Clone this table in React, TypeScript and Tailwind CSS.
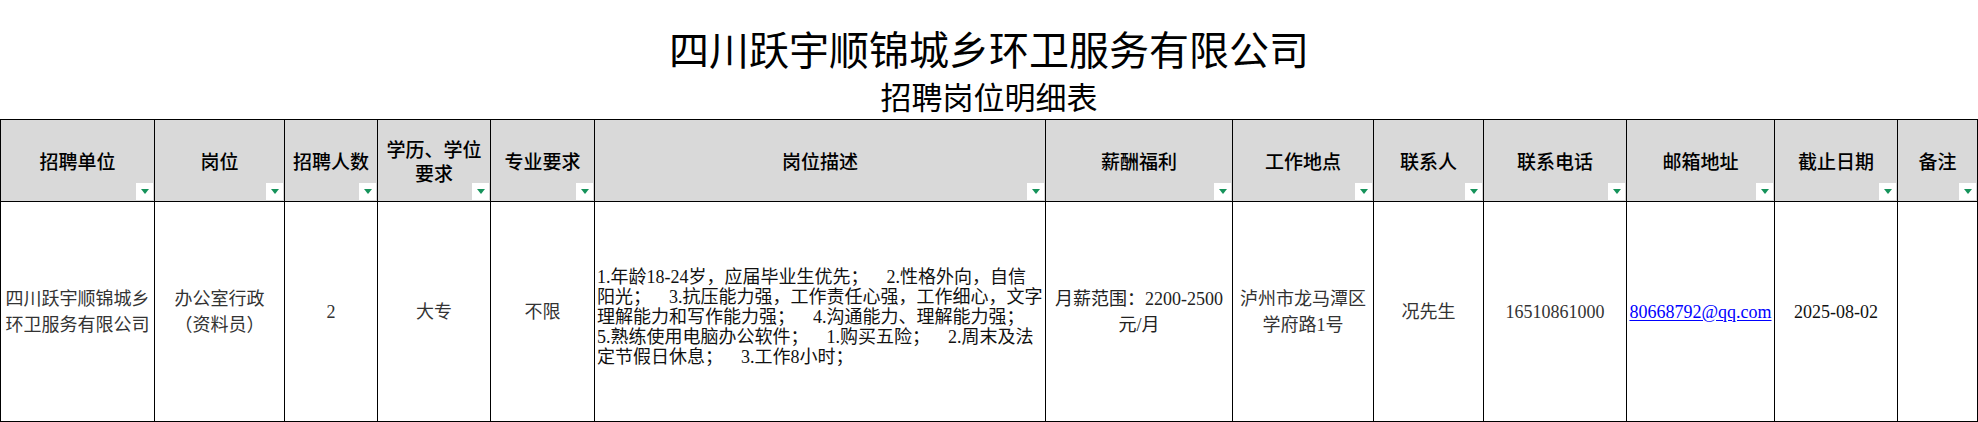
import React from 'react';

const headers = [
  ['招聘单位'],
  ['岗位'],
  ['招聘人数'],
  ['学历、学位', '要求'],
  ['专业要求'],
  ['岗位描述'],
  ['薪酬福利'],
  ['工作地点'],
  ['联系人'],
  ['联系电话'],
  ['邮箱地址'],
  ['截止日期'],
  ['备注'],
];

const descLines = [
  '1.年龄18-24岁，应届毕业生优先；\u2002\u20022.性格外向，自信',
  '阳光；\u2002\u20023.抗压能力强，工作责任心强，工作细心，文字',
  '理解能力和写作能力强；\u2002\u20024.沟通能力、理解能力强；',
  '5.熟练使用电脑办公软件；\u2002\u20021.购买五险；\u2002\u20022.周末及法',
  '定节假日休息；\u2002\u20023.工作8小时；',
];

const FilterButton: React.FC = () => (
  <div className="absolute right-[1px] bottom-[1px] w-[17px] h-[17px] bg-white flex items-center justify-center">
    <svg width="8" height="5" viewBox="0 0 8 5">
      <path d="M0 0 L8 0 L4 5 Z" fill="#16935b" />
    </svg>
  </div>
);

const HeaderCell: React.FC<{ lines: string[] }> = ({ lines }) => (
  <div className="relative h-[82px] bg-[#d9d9d9] border-r border-b border-black flex flex-col items-center justify-center text-center text-[19px] leading-[24px] font-medium text-black">
    {lines.map((l) => (
      <div key={l}>{l}</div>
    ))}
    <FilterButton />
  </div>
);

const BodyCell: React.FC<{ lines?: string[]; className?: string; children?: React.ReactNode }> = ({
  lines,
  className = 'text-[#333]',
  children,
}) => (
  <div className={`h-[220px] border-r border-b border-black flex flex-col items-center justify-center text-center whitespace-nowrap ${className}`}>
    {lines ? lines.map((l) => <div key={l}>{l}</div>) : children}
  </div>
);

export default function App() {
  return (
    <div className="w-[1978px] h-[422px] bg-white overflow-hidden font-['Noto_Sans_CJK_SC',sans-serif] text-black">
      {/* Title */}
      <div className="h-[119px] flex flex-col items-center">
        <div className="pt-[28px] text-[40px] leading-[40px]">四川跃宇顺锦城乡环卫服务有限公司</div>
        <div className="mt-[12px] text-[31px] leading-[32px]">招聘岗位明细表</div>
      </div>

      {/* Table */}
      <div className="grid grid-cols-[154px_130px_93px_113px_104px_451px_187px_141px_110px_143px_148px_123px_80px] border-l border-t border-black">
        {headers.map((h) => (
          <HeaderCell key={h.join('')} lines={h} />
        ))}

        <div className="contents font-['Liberation_Serif','Noto_Sans_CJK_SC',serif] text-[18px] leading-[26px]">
          <BodyCell lines={['四川跃宇顺锦城乡', '环卫服务有限公司']} />
          <BodyCell lines={['办公室行政', '（资料员）']} />
          <BodyCell lines={['2']} />
          <BodyCell lines={['大专']} />
          <BodyCell lines={['不限']} />
          <BodyCell className="!items-start text-left pl-[2px] pt-[10px] leading-[20px] text-[#111]">
            {descLines.map((l) => (
              <div key={l} className="whitespace-pre">{l}</div>
            ))}
          </BodyCell>
          <BodyCell lines={['月薪范围：2200-2500', '元/月']} className="text-[#222]" />
          <BodyCell lines={['泸州市龙马潭区', '学府路1号']} />
          <BodyCell lines={['况先生']} />
          <BodyCell lines={['16510861000']} />
          <BodyCell>
            <a href="#" className="text-[#0000ff] underline underline-offset-2">80668792@qq.com</a>
          </BodyCell>
          <BodyCell lines={['2025-08-02']} className="text-[#111]" />
          <BodyCell />
        </div>
      </div>
    </div>
  );
}
